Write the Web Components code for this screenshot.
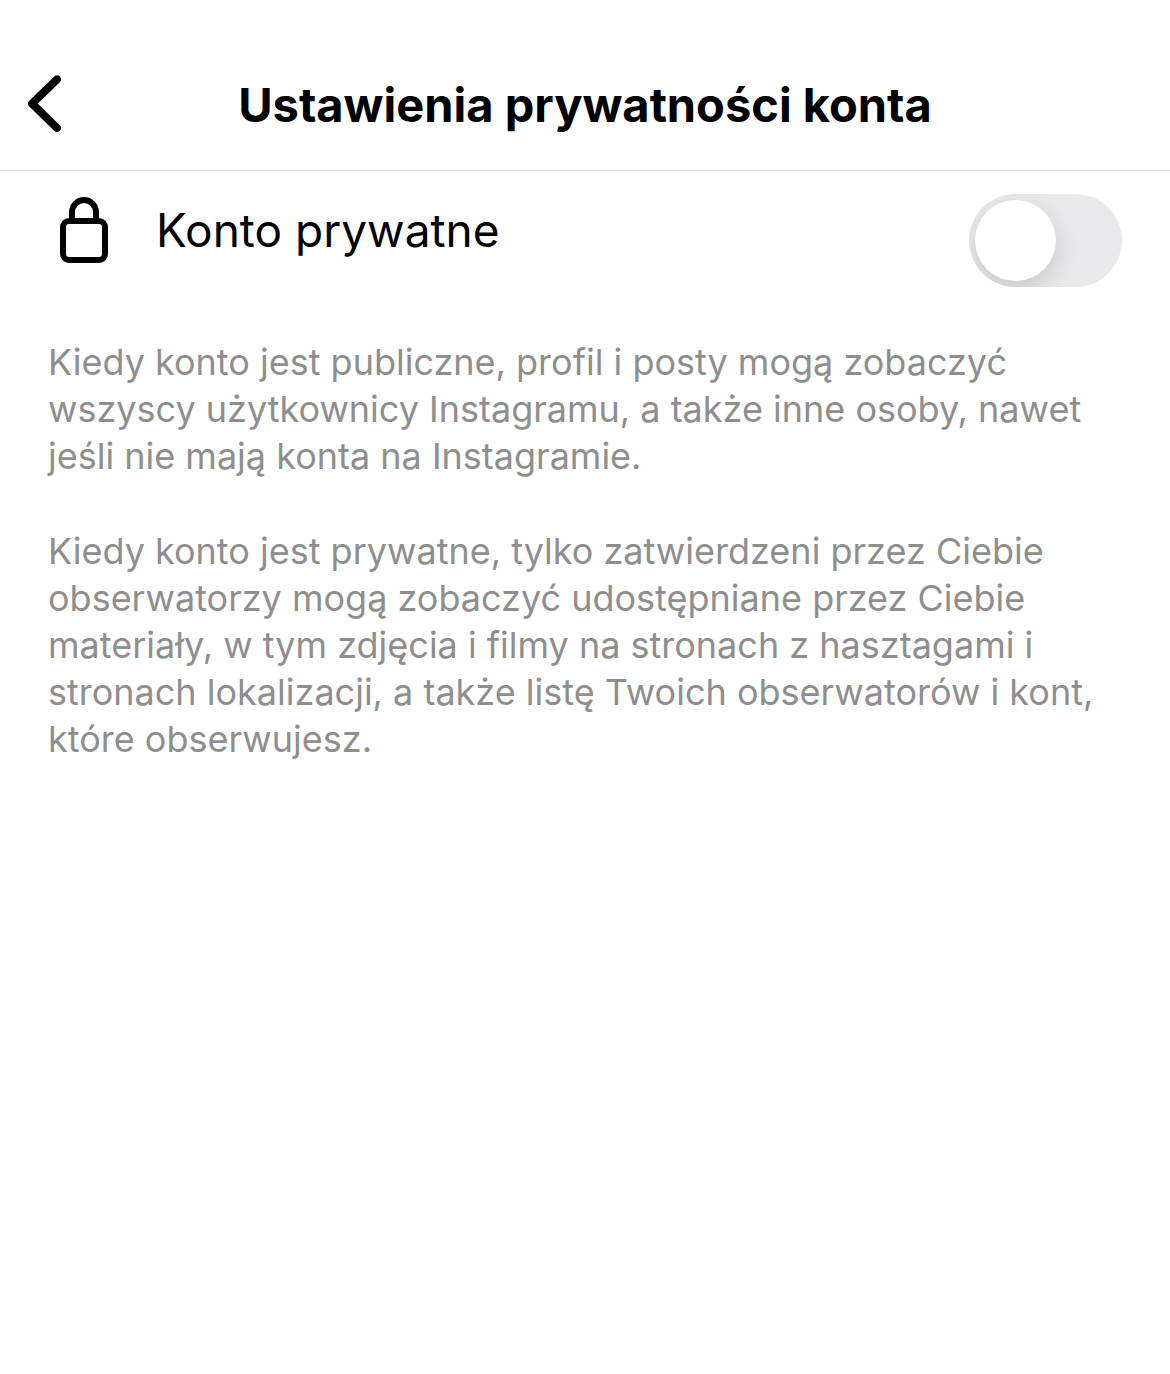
<!DOCTYPE html>
<html lang="pl">
<head>
<meta charset="utf-8">
<meta name="viewport" content="width=device-width, initial-scale=1">
<title>Ustawienia prywatności konta</title>
<style>
    body {
        margin: 0;
        background: #fff;
        color: #000;
        font-family: 'Inter', 'Liberation Sans', sans-serif;
    }
</style>
</head>
<body>
    <settings-page>
        <nav-header slot="header">Ustawienia prywatności konta</nav-header>
        <switch-row>Konto prywatne</switch-row>
        <help-text>
            <p>Kiedy konto jest publiczne, profil i posty mogą zobaczyć wszyscy użytkownicy Instagramu, a także inne osoby, nawet jeśli nie mają konta na Instagramie.</p>
            <p>Kiedy konto jest prywatne, tylko zatwierdzeni przez Ciebie obserwatorzy mogą zobaczyć udostępniane przez Ciebie materiały, w tym zdjęcia i filmy na stronach z hasztagami i stronach lokalizacji, a także listę Twoich obserwatorów i kont, które obserwujesz.</p>
        </help-text>
    </settings-page>

<script>
//Small helper to build a template out of a string
function makeTemplate(html) {
    const template = document.createElement('template');
    template.innerHTML = html;
    return template;
}

const pageTemplate = makeTemplate(`
    <style>
        :host {
            display: flex;
            flex-direction: column;
            min-height: 100vh;
        }

        main {
            display: flex;
            flex-direction: column;
            gap: 52px;
            padding: 23px 48px;
        }
    </style>

    <slot name="header"></slot>
    <main><slot></slot></main>
`);

const headerTemplate = makeTemplate(`
    <style>
        :host {
            display: block;
            border-bottom: 1px solid #dbdbdb;
        }

        header {
            display: grid;
            grid-template-columns: 72px 1fr 72px;
            align-items: center;
            padding: 69px 24px 29px;
        }

        button {
            width: 72px;
            height: 72px;
            padding: 0;
            border: 0;
            background: none;
            color: inherit;
            cursor: pointer;
        }

        svg {
            display: block;
        }

        h1 {
            margin: 0;
            font-size: 47px;
            font-weight: 700;
            line-height: 72px;
            text-align: center;
        }
    </style>

    <header>
        <button type="button" aria-label="Wstecz">
            <svg width="72" height="72" viewBox="0 0 72 72" fill="none" stroke="currentColor" stroke-width="8" stroke-linecap="round" stroke-linejoin="round">
                <path d="M33 10.4 8 34.7 33 59"/>
            </svg>
        </button>
        <h1><slot></slot></h1>
    </header>
`);

const rowTemplate = makeTemplate(`
    <style>
        :host {
            display: flex;
            align-items: flex-start;
            gap: 36px;
        }

        svg {
            flex: none;
        }

        label {
            flex: 1;
            font-size: 46px;
            line-height: 72px;
        }

        input {
            appearance: none;
            flex: none;
            width: 153px;
            height: 93px;
            margin: 0;
            border-radius: 47px;
            background: #e9e9eb;
            overflow: hidden;
            cursor: pointer;
        }

        /* the knob */
        input::before {
            content: '';
            display: block;
            width: 81px;
            height: 81px;
            margin: 6px;
            border-radius: 50%;
            background: #fff;
            box-shadow: 0 9px 24px rgba(0, 0, 0, 0.15);
        }

        input:checked {
            background: #34c759;
        }

        input:checked::before {
            margin-left: 66px;
        }
    </style>

    <svg width="72" height="72" viewBox="0 0 72 72" fill="none" stroke="currentColor" stroke-width="6" aria-hidden="true">
        <rect x="15" y="27" width="42" height="39" rx="6"/>
        <path d="M24 27V18a12 12 0 0 1 24 0v9"/>
    </svg>
    <label for="toggle"><slot></slot></label>
    <input type="checkbox" role="switch" id="toggle">
`);

const helpTemplate = makeTemplate(`
    <style>
        :host {
            display: flex;
            flex-direction: column;
            gap: 48px;
            color: #8e8e8e;
            font-size: 36px;
            line-height: 47px;
        }

        ::slotted(p) {
            margin: 0;
        }
    </style>

    <slot></slot>
`);

//Common base, attaches the shadow root and clones the template in it
class BaseElement extends HTMLElement {
    constructor() {
        super();
        this.attachShadow({mode: 'open'});
        this.shadowRoot.appendChild(this.constructor.template.content.cloneNode(true));
    }
}

class SettingsPage extends BaseElement {
    static template = pageTemplate;
}

class NavHeader extends BaseElement {
    static template = headerTemplate;

    connectedCallback() {
        this.shadowRoot.querySelector('button').addEventListener('click', () => history.back());
    }
}

class SwitchRow extends BaseElement {
    static template = rowTemplate;
}

class HelpText extends BaseElement {
    static template = helpTemplate;
}

customElements.define('settings-page', SettingsPage);
customElements.define('nav-header', NavHeader);
customElements.define('switch-row', SwitchRow);
customElements.define('help-text', HelpText);
</script>
</body>
</html>
